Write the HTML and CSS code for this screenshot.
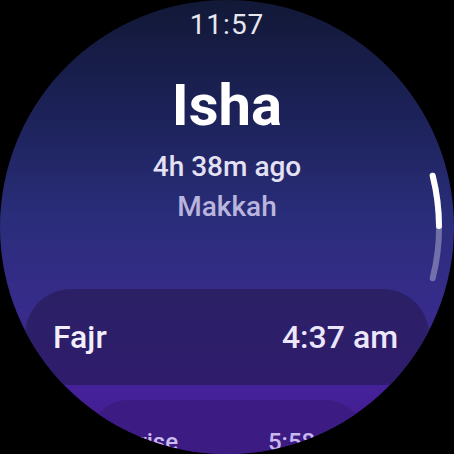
FILE: index.html
```html
<!DOCTYPE html>
<html lang="en">
<head>
    <meta charset="UTF-8">
    <meta name="viewport" content="width=device-width, initial-scale=1.0">
    <title>Prayer Times</title>
    <link rel="stylesheet" href="styles.css">
</head>
<body>
    <div class="watch">
        <div class="time">11:57</div>

        <h1 class="prayer">Isha</h1>
        <p class="ago">4h 38m ago</p>
        <p class="city">Makkah</p>

        <ul class="times">
            <li class="row">
                <span>Fajr</span>
                <span class="at">4:37 am</span>
            </li>
            <li class="row small">
                <span>Sunrise</span>
                <span class="at">5:58 am</span>
            </li>
        </ul>

        <svg class="scroll" width="454" height="454" viewBox="0 0 454 454">
            <path d="M432.7 175.7 A212 212 0 0 1 432.7 278.3" class="track"/>
            <path d="M432.7 175.7 A212 212 0 0 1 439 226" class="thumb"/>
        </svg>
    </div>
</body>
</html>
```

FILE: styles.css
```css
body {
    margin: 0;
    background: #000;
    font-family: Roboto, "Noto Sans", sans-serif;
}
.watch {
    position: relative;
    width: 454px;
    height: 454px;
    border-radius: 50%;
    overflow: hidden;
    display: flex;
    flex-direction: column;
    align-items: center;
    background: linear-gradient(180deg, #121836 0%, #1c2258 25%, #2a2d7a 48%, #352c88 64%, #3a2890 78%, #45219a 86%, #3f1a84 100%);
}
.time {
    padding-top: 9px;
    font-size: 28px;
    line-height: 32px;
    letter-spacing: 1px;
    color: #e6e7f0;
}
.prayer {
    margin: 30px 0 0;
    font-size: 58px;
    line-height: 68px;
    font-weight: 700;
    color: #fff;
}
.ago, .city {
    margin: 0;
    font-size: 28px;
    line-height: 40px;
    font-weight: 500;
}
.ago {
    margin-top: 8px;
    color: #e4e1f4;
}
.city {
    color: #bab5de;
}
.times {
    list-style: none;
    margin: 62px 0 0;
    padding: 0;
    width: 100%;
    display: flex;
    flex-direction: column;
    align-items: center;
    gap: 15px;
}
.row {
    box-sizing: border-box;
    width: 404px;
    height: 96px;
    padding: 0 31px 0 28px;
    border-radius: 46px;
    display: flex;
    justify-content: space-between;
    align-items: center;
    background: linear-gradient(180deg, #2b2066, #2f1c6c);
    color: #f2eefb;
    font-size: 32px;
    font-weight: 500;
}
.row .at {
    color: #ece6fa;
}
.row.small {
    width: 276px;
    padding: 0 10px 12px 8px;
    border-radius: 40px;
    background: #3c1b82;
    color: #cbbdf0;
    font-size: 24px;
}
.row.small .at {
    color: #c7b8ee;
}
.scroll {
    position: absolute;
    left: 0;
    top: 0;
    fill: none;
    stroke-width: 6;
    stroke-linecap: round;
}
.track {
    stroke: rgba(255, 255, 255, 0.32);
}
.thumb {
    stroke: #fff;
}
```
